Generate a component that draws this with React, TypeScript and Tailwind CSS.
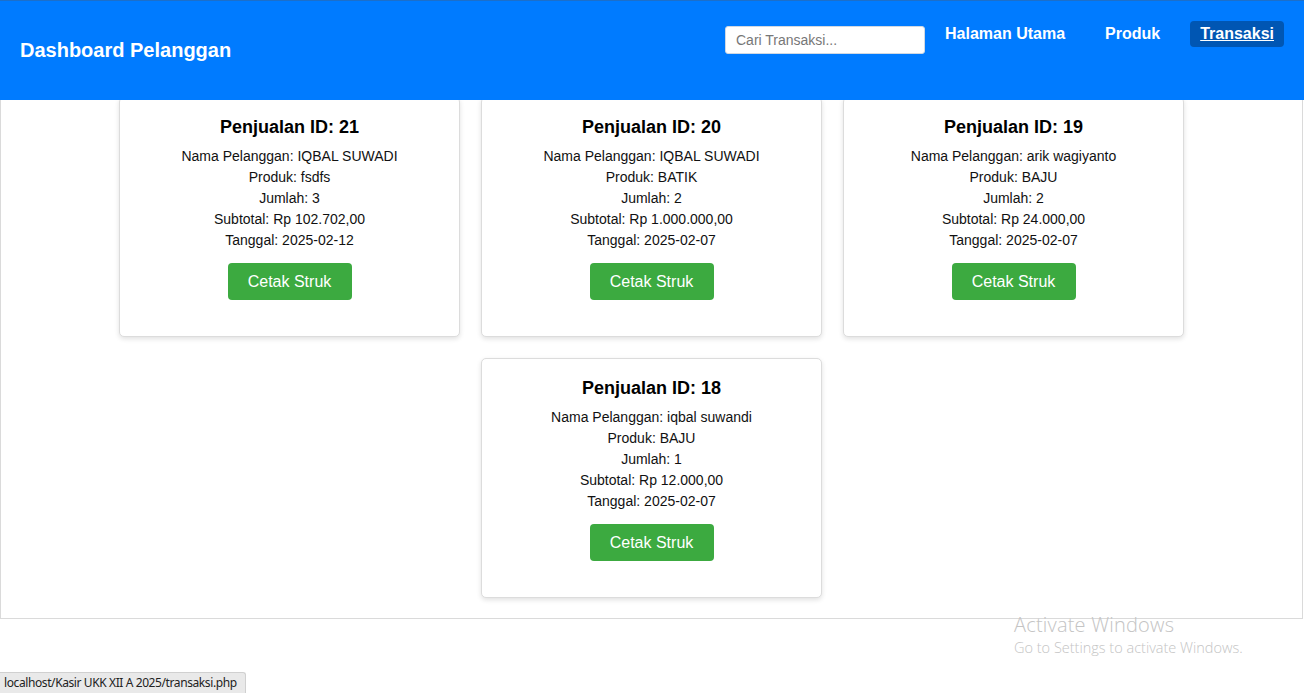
import React from 'react'

const sales = [
  { id: 21, nama: 'IQBAL SUWADI', produk: 'fsdfs', jumlah: 3, subtotal: 'Rp 102.702,00', tanggal: '2025-02-12' },
  { id: 20, nama: 'IQBAL SUWADI', produk: 'BATIK', jumlah: 2, subtotal: 'Rp 1.000.000,00', tanggal: '2025-02-07' },
  { id: 19, nama: 'arik wagiyanto', produk: 'BAJU', jumlah: 2, subtotal: 'Rp 24.000,00', tanggal: '2025-02-07' },
  { id: 18, nama: 'iqbal suwandi', produk: 'BAJU', jumlah: 1, subtotal: 'Rp 12.000,00', tanggal: '2025-02-07' },
]

function SaleCard({ sale }: { sale: any }) {
  return (
    <div className="w-[341px] h-[240px] bg-white border border-[#dcdcdc] rounded-[5px] shadow-[0_2px_5px_rgba(0,0,0,0.12)] pt-[18px] flex flex-col items-center text-center">
      <h3 className="text-[18px] leading-[22px] font-bold text-black">Penjualan ID: {sale.id}</h3>
      <div className="mt-[8px] text-[14px] leading-[21px] text-[#111]">
        <p>Nama Pelanggan: {sale.nama}</p>
        <p>Produk: {sale.produk}</p>
        <p>Jumlah: {sale.jumlah}</p>
        <p>Subtotal: {sale.subtotal}</p>
        <p>Tanggal: {sale.tanggal}</p>
      </div>
      <button className="mt-[12px] w-[124px] h-[37px] rounded-[4px] bg-[#3caa40] text-white text-[16px]">
        Cetak Struk
      </button>
    </div>
  )
}

export default function App() {
  return (
    <div className="relative w-[1304px] h-[693px] bg-white overflow-hidden" style={{ fontFamily: '"Liberation Sans", Arial, sans-serif' }}>
      {/* Header */}
      <header className="absolute top-0 left-0 right-0 z-10 h-[100px] bg-[#007bff] border-t border-[#1d6fc9] flex justify-between px-5">
        <h1 className="self-center text-white font-bold text-[20px] leading-6 mt-[-1px]">Dashboard Pelanggan</h1>
        <div className="flex items-start mt-[20px]">
          <input
            type="text"
            placeholder="Cari Transaksi..."
            className="mt-[5px] w-[200px] h-[28px] bg-white rounded-[3px] border border-[#cfd8e3] px-[10px] text-[14px] text-[#333] placeholder:text-[#777] outline-none"
          />
          <nav className="flex gap-5 ml-[10px]">
            <a className="px-[10px] py-[5px] leading-4 text-[16px] font-bold text-white">Halaman Utama</a>
            <a className="px-[10px] py-[5px] leading-4 text-[16px] font-bold text-white">Produk</a>
            <a className="px-[10px] py-[5px] leading-4 text-[16px] font-bold text-white underline bg-[#0056b3] rounded-[4px]">Transaksi</a>
          </nav>
        </div>
      </header>

      {/* Content */}
      <main className="mt-[76px] w-[1303px] border border-[#dadada] px-5 pt-5 pb-[20px]">
        <div className="flex flex-wrap justify-center gap-x-[21px] gap-y-[21px]">
          {sales.map((s) => (
            <SaleCard key={s.id} sale={s} />
          ))}
        </div>
      </main>

      {/* Windows watermark */}
      <div className="absolute left-[1014px] top-[613px] text-[#c4c4c4]" style={{ fontFamily: '"Open Sans", "Noto Sans", sans-serif' }}>
        <div className="text-[20px] leading-6 font-light tracking-[0.2px]">Activate Windows</div>
        <div className="text-[14.5px] leading-5 mt-[1px] font-light">Go to Settings to activate Windows.</div>
      </div>

      {/* Status bar */}
      <div className="absolute left-0 bottom-0 h-[21px] w-[246px] bg-[#e9e9e9] border-t border-r border-[#d0d0d0] rounded-tr-[3px] px-[4px] text-[12px] leading-[20px] text-[#222] whitespace-nowrap overflow-hidden tracking-[-0.4px]" style={{ fontFamily: '"Noto Sans", "Open Sans", sans-serif' }}>
        localhost/Kasir UKK XII A 2025/transaksi.php
      </div>
    </div>
  )
}
